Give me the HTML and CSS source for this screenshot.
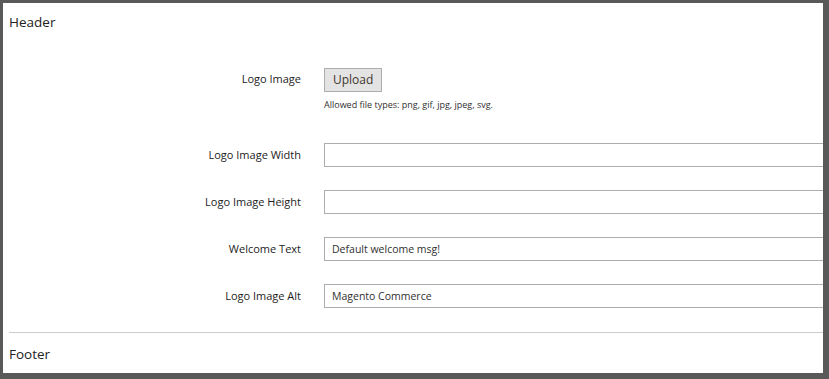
FILE: index.html
```html
<!DOCTYPE html>
<html lang="en">
<head>
    <meta charset="UTF-8">
    <title>Design Configuration - Header</title>
    <link rel="stylesheet" href="styles.css">
</head>
<body>
    <div class="page">
        <!-- Header section -->
        <div class="section">
            <div class="section-title">Header</div>

            <div class="fields">
                <div class="field">
                    <label class="field-label">Logo Image</label>
                    <div class="field-control">
                        <button class="upload-btn">Upload</button>
                        <div class="note">Allowed file types: png, gif, jpg, jpeg, svg.</div>
                    </div>
                </div>

                <div class="field">
                    <label class="field-label">Logo Image Width</label>
                    <div class="field-control">
                        <input type="text" class="text-input" value="">
                    </div>
                </div>

                <div class="field">
                    <label class="field-label">Logo Image Height</label>
                    <div class="field-control">
                        <input type="text" class="text-input" value="">
                    </div>
                </div>

                <div class="field">
                    <label class="field-label">Welcome Text</label>
                    <div class="field-control">
                        <input type="text" class="text-input" value="Default welcome msg!">
                    </div>
                </div>

                <div class="field">
                    <label class="field-label">Logo Image Alt</label>
                    <div class="field-control">
                        <input type="text" class="text-input" value="Magento Commerce">
                    </div>
                </div>
            </div>
        </div>

        <!-- Footer section -->
        <div class="section section-footer">
            <div class="section-title">Footer</div>
        </div>
    </div>
</body>
</html>
```

FILE: styles.css
```css
/* Basic Reset */
body, div, label, button, input {
    margin: 0;
    padding: 0;
    box-sizing: border-box;
}

body {
    font-family: "Open Sans", Arial, sans-serif;
    background-color: #595959; /* Screenshot frame */
    color: #303030;
    overflow: hidden;
}

/* White panel inside the frame */
.page {
    margin: 3px 0 0 3px;
    width: 820px;
    height: 370px;
    background-color: #fff;
    padding: 10px 0 0 6px;
    overflow: hidden;
}

.section-title {
    font-size: 13.5px;
    line-height: 18px;
    color: #222;
}

/* Form rows */
.fields {
    display: flex;
    flex-direction: column;
    gap: 23px;
    padding-top: 36px;
}

.field {
    display: grid;
    grid-template-columns: 292px 520px;
    column-gap: 23px;
    align-items: start;
}

.field-label {
    font-size: 11px;
    line-height: 24px;
    text-align: right;
    color: #1c1c1c;
}

.upload-btn {
    height: 24px;
    padding: 0 8px;
    background-color: #e3e3e3;
    border: 1px solid #adadad;
    font-family: inherit;
    font-size: 12px;
    color: #41362f;
}

.note {
    margin: 6px 0 8px;
    font-size: 9px;
    line-height: 14px;
    color: #303030;
}

.text-input {
    display: block;
    width: 520px;
    height: 24px;
    padding: 0 7px;
    border: 1px solid #adadad;
    font-family: inherit;
    font-size: 10.5px;
    color: #303030;
    outline: none;
}

/* Footer */
.section-footer {
    margin-top: 24px;
    border-top: 1px solid #cccccc;
    padding-top: 12px;
}
```
